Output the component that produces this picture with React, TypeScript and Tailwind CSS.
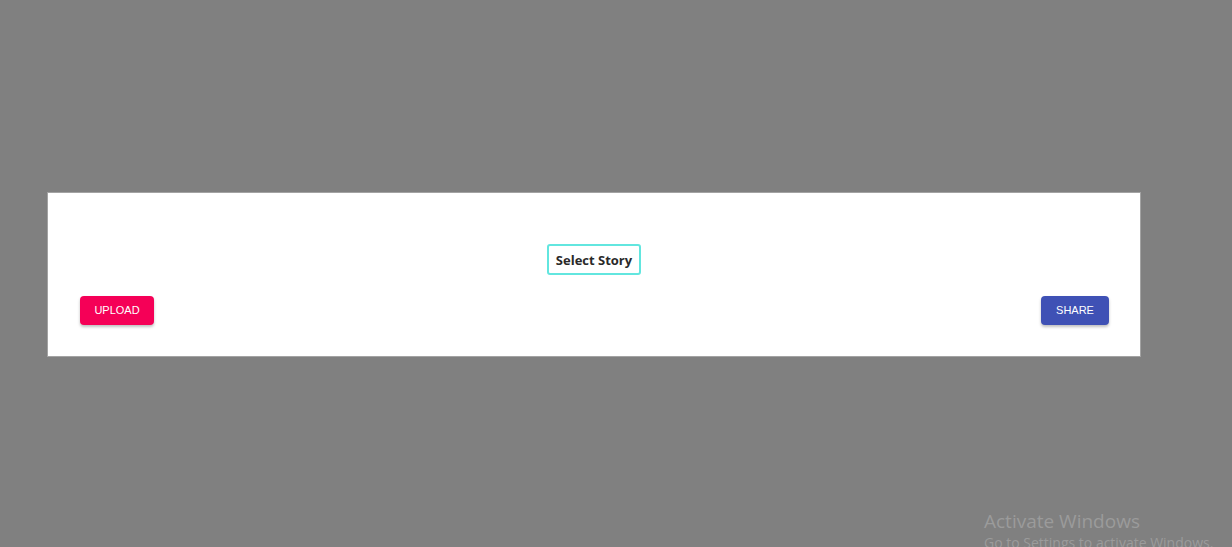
import React from "react";

export default function App() {
  return (
    <div className="relative h-[547px] w-full overflow-hidden bg-[#808080] pt-[192px] pl-[47px]">
      <div className="flex h-[165px] w-[1094px] flex-col border border-[#a3a3a3] bg-white">
        <div className="flex justify-center pt-[51px]">
          <button
            type="button"
            className="h-[31px] rounded-[3px] border-2 border-[#62e6df] px-[7px] pt-[2px] text-[13px] font-bold text-[#2a2a2a] [font-family:'Open_Sans',sans-serif]"
          >
            Select Story
          </button>
        </div>
        <div className="mt-[21px] flex items-center justify-between pl-[32px] pr-[31px]">
          <button
            type="button"
            className="h-[29px] w-[74px] rounded-[4px] bg-[#f50057] text-[11px] text-white shadow-[0_2px_3px_rgba(0,0,0,0.25)] [font-family:'Liberation_Sans',Arial,sans-serif]"
          >
            UPLOAD
          </button>
          <button
            type="button"
            className="h-[29px] w-[68px] rounded-[4px] bg-[#3f51b5] text-[11px] text-white shadow-[0_2px_3px_rgba(0,0,0,0.25)] [font-family:'Liberation_Sans',Arial,sans-serif]"
          >
            SHARE
          </button>
        </div>
      </div>

      <div className="absolute left-[984px] top-[508px] whitespace-nowrap text-[#9b9b9b] [font-family:'Open_Sans',sans-serif]">
        <div className="text-[19px] leading-[26px]">Activate Windows</div>
        <div className="text-[14px] leading-[18px]">Go to Settings to activate Windows.</div>
      </div>
    </div>
  );
}
